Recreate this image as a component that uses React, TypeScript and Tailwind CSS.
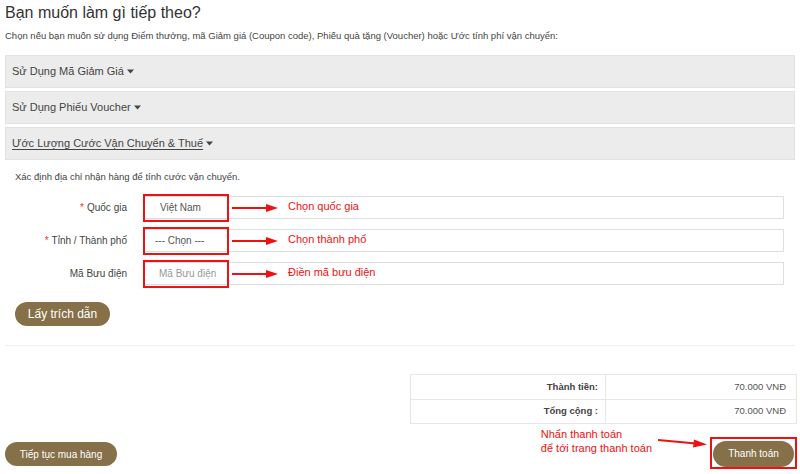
import React from "react";

function Caret() {
  return (
    <svg width="7" height="5" viewBox="0 0 7 5" className="ml-[3px] inline-block">
      <path d="M0 0.5 L7 0.5 L3.5 4.5 Z" fill="#444" />
    </svg>
  );
}

function RowArrow() {
  return (
    <svg width="46" height="10" viewBox="0 0 46 10">
      <line x1="0" y1="5" x2="36" y2="5" stroke="#ee1111" strokeWidth="2" />
      <path d="M34 1 L46 5 L34 9 Z" fill="#ee1111" />
    </svg>
  );
}

function Panel({ label, underline }: { label: string; underline?: boolean }) {
  return (
    <div className="h-[33px] flex items-center bg-[#ececec] border border-[#e2e2e2] pl-[6px] text-[11px] text-[#444]">
      <span className={underline ? "underline underline-offset-2" : ""}>{label}</span>
      <Caret />
    </div>
  );
}

function FormRow({
  label,
  required,
  value,
  placeholder,
  pl,
  hint,
}: {
  label: string;
  required?: boolean;
  value?: string;
  placeholder?: boolean;
  pl: string;
  hint: string;
}) {
  return (
    <div className="flex items-center gap-[16px] h-[23px]">
      <div className="w-[122px] text-right text-[10px] text-[#444]">
        {required && <span className="text-[#e33] mr-[3px]">*</span>}
        {label}
      </div>
      <div className="relative flex-1 h-[23px] border border-[#dedede] bg-white flex items-center">
        <span className={`${pl} text-[10px] ${placeholder ? "text-[#999]" : "text-[#555]"}`}>{value}</span>
        <div className="absolute left-[-1px] top-[-3px] w-[86px] h-[28px] border-2 border-[#ee1111]" />
        <div className="absolute left-[88px] top-[6px] flex items-center">
          <RowArrow />
        </div>
        <div className="absolute left-[144px] top-[2px] text-[11px] text-[#ee1111] leading-[14px]">{hint}</div>
      </div>
    </div>
  );
}

export default function App() {
  return (
    <div className="w-[800px] h-[474px] overflow-hidden bg-white px-[5px] font-['Liberation_Sans',Arial,sans-serif] text-[#333]">
      <h2 className="pt-[2px] text-[16px] leading-[22px] text-[#333]">Bạn muốn làm gì tiếp theo?</h2>
      <p className="mt-[5px] text-[9.5px] leading-[14px] text-[#444]">
        Chọn nếu bạn muốn sử dụng Điểm thưởng, mã Giảm giá (Coupon code), Phiếu quà tặng (Voucher) hoặc Ước tính phí vận chuyển:
      </p>

      <div className="mt-[12px] flex flex-col gap-[3px]">
        <Panel label="Sử Dụng Mã Giảm Giá" />
        <Panel label="Sử Dụng Phiếu Voucher" />
        <Panel label="Ước Lượng Cước Vận Chuyển & Thuế" underline />
      </div>

      <p className="mt-[10px] pl-[10px] text-[9.5px] leading-[14px] text-[#444]">
        Xác định địa chỉ nhận hàng để tính cước vận chuyển.
      </p>

      <div className="mt-[12px] pr-[11px] flex flex-col gap-[10px]">
        <FormRow label="Quốc gia" required value="Việt Nam" pl="pl-[16px]" hint="Chọn quốc gia" />
        <FormRow label="Tỉnh / Thành phố" required value="--- Chọn ---" pl="pl-[11px]" hint="Chọn thành phố" />
        <FormRow label="Mã Bưu điện" value="Mã Bưu điện" placeholder pl="pl-[15px]" hint="Điền mã bưu điện" />
      </div>

      <button className="mt-[17px] ml-[10px] w-[95px] h-[24px] rounded-full bg-[#857049] text-white text-[12px]">
        Lấy trích dẫn
      </button>

      <div className="mt-[19px] h-px bg-[#efefef]" />

      <table className="mt-[28px] ml-[405px] w-[387px] border-collapse text-[9.5px]">
        <tbody>
          <tr className="h-[25px]">
            <td className="w-[195px] border border-[#e6e6e6] text-right pr-[7px] font-bold text-[#444]">Thành tiền:</td>
            <td className="border border-[#e6e6e6] text-right pr-[10px] text-[#555]">70.000 VNĐ</td>
          </tr>
          <tr className="h-[24px]">
            <td className="border border-[#e6e6e6] text-right pr-[7px] font-bold text-[#444]">Tổng cộng :</td>
            <td className="border border-[#e6e6e6] text-right pr-[10px] text-[#555]">70.000 VNĐ</td>
          </tr>
        </tbody>
      </table>

      <div className="mt-[3px] flex justify-between items-end mr-[-2px]">
        <button className="mb-[3px] w-[112px] h-[24px] rounded-full bg-[#857049] text-white text-[10px]">
          Tiếp tục mua hàng
        </button>
        <div className="flex items-end">
          <div className="mb-[14px] text-[11px] leading-[14px] text-[#ee1111]">
            Nhấn thanh toán
            <br />
            để tới trang thanh toán
          </div>
          <svg width="50" height="12" viewBox="0 0 50 12" className="ml-[6px] mb-[20px]">
            <line x1="0" y1="3" x2="38" y2="6.5" stroke="#ee1111" strokeWidth="2" />
            <path d="M36 2.5 L49 7.5 L35 10.5 Z" fill="#ee1111" />
          </svg>
          <div className="ml-[2px] w-[87px] h-[32px] border-2 border-[#ee1111] p-[1px]">
            <button className="w-full h-full rounded-full bg-[#857049] text-white text-[10px]">Thanh toán</button>
          </div>
        </div>
      </div>
    </div>
  );
}
